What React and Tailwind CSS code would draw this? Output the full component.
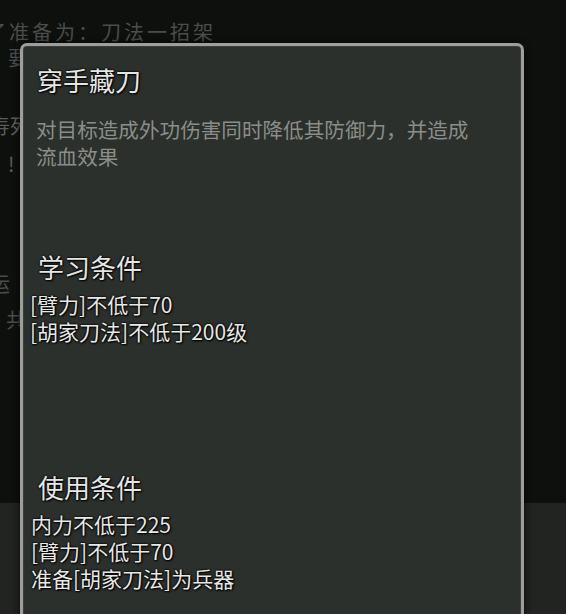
import React from "react";

const font = { fontFamily: '"Noto Sans CJK SC", "Noto Sans", sans-serif' };

const outline = "[text-shadow:0_0_2px_#000,0_0_2px_#000,1px_1px_2px_#000]";

const Heading = ({ children, className = "" }) => (
  <div className={`text-[26px] leading-[32px] text-[#e6e6e4] ${outline} ${className}`}>
    {children}
  </div>
);

const Lines = ({ items, className = "" }) => (
  <div className={`text-[21px] leading-[27px] text-[#e8e8e6] ${outline} ${className}`}>
    {items.map((t) => (
      <div key={t}>{t}</div>
    ))}
  </div>
);

const App = () => {
  return (
    <div style={font} className="relative w-[566px] h-[614px] overflow-hidden bg-[#0e100e]">
      {/* page behind the dialog */}
      <div className="flex flex-col h-full">
        <div className="flex-1 text-[20px] leading-[26px] text-[#4b4d4a] pt-[19px] -ml-[14px]">
          <div className="tracking-[3px]">了准备为：刀法一招架</div>
          <div className="pl-[22px]">要</div>
          <div className="mt-[42px] pl-[4px] text-[#5a5c59]">寿死</div>
          <div className="mt-[12px] pl-[22px] text-[#5a5c59]">!</div>
          <div className="mt-[94px] pl-[4px]">运</div>
          <div className="mt-[10px] pl-[20px]">共</div>
        </div>
        <div className="h-[111px] bg-[#222422]" />
      </div>

      {/* skill tooltip */}
      <div className="absolute left-[20px] top-[43px] w-[504px] h-[600px] rounded-t-[7px] border-[3px] border-b-0 border-[#9d9f9c] bg-[#2c302c] shadow-[0_0_6px_rgba(0,0,0,0.8),inset_0_0_0_1px_#3a3d3a]">
        <Heading className="pl-[14px] pt-[18px]">穿手藏刀</Heading>
        <div className="pl-[13px] mt-[20px] text-[20.6px] leading-[27px] text-[#8b8d89]">
          <div>对目标造成外功伤害同时降低其防御力，并造成</div>
          <div>流血效果</div>
        </div>

        <Heading className="pl-[15px] mt-[81px]">学习条件</Heading>
        <Lines className="pl-[7px] mt-[8px]" items={["[臂力]不低于70", "[胡家刀法]不低于200级"]} />

        <Heading className="pl-[15px] mt-[126px]">使用条件</Heading>
        <Lines
          className="pl-[8px] mt-[8px]"
          items={["内力不低于225", "[臂力]不低于70", "准备[胡家刀法]为兵器"]}
        />
      </div>
    </div>
  );
};

export default App;
